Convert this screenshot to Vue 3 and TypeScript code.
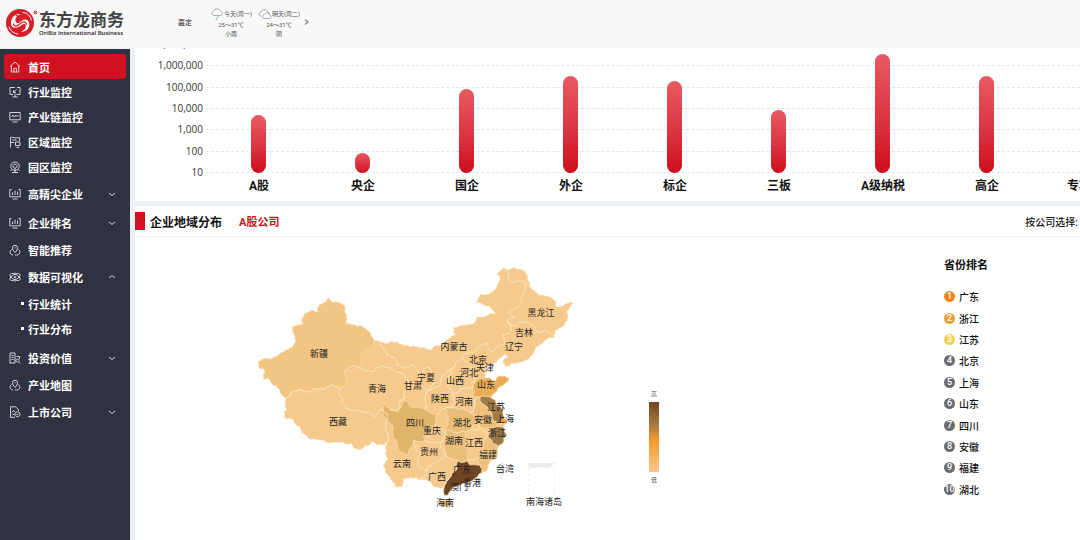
<script setup lang="ts">
type Point = [number, number]

interface NavItem {
  label: string
  icon: string
  active?: boolean
  open?: boolean
  children?: string[]
}

const icons: Record<string, string> = {
  home: 'M1 5.6 6 1l5 4.6M2.3 4.6V11h7.4V4.6M4.8 11V7.4h2.6V11',
  monitor: 'M6 1.5H1v7h3M8 1.500h3v7H7.500M3.500 11h5M7.500 3.500l-3 3M4.500 4.200v2.300h2.300M6 7.500V11',
  wave: 'M.8 1.5h10.4v7.3H.8zM3.5 11h5M2.5 6 4 4l1.5 2.2L7 4l1.2 1.6L9.500 4.500',
  region: 'M1.500 11.500V1.500C4 .5 5 2.800 10.500 1.500V5M1.500 6.500H5M6.500 6h4.500v3.500H6.500zM7.500 11.500h2.500M3.500 4h4',
  park: 'M6 1a4.200 4.200 0 1 0 .01 0M6 3.200a2 2 0 1 0 .01 0M6 7.500V11.500M3 11.500h6M2.500 8.500l-1 1.500M9.500 8.500l1 1.500',
  bars: 'M2.500 1.500H.8v7.300h10.400V1.500H9.500M3.500 11h5M3.500 7V4.500M6 7V2.500M8.500 7V3.500',
  pin: 'M6 8.500C4.200 6.500 3.500 5.400 3.500 3.800a2.500 2.500 0 0 1 5 0C8.500 5.400 7.800 6.500 6 8.500ZM6 3.300v1M2.500 5.500C0 7.500 1 11 4 11M9.500 5.500C12 7.500 11 11 7.500 11H6',
  atom: 'M1 3.500C3 0 12.500 6 11 8.500 9 12-.5 6 1 3.500ZM11 3.500C9 0-.5 6 1 8.500 3 12 12.500 6 11 3.500ZM6 5.400a.8.8 0 1 0 .01 0M6 1.500v1M6 9.700v1',
  building: 'M1 11V1h5v10M.5 11h5.500M2.500 3.500h2M2.500 5.500h2M2.500 7.500h2M7.500 4.500h3V7M8.500 7a1.500 1.500 0 1 0 .01 0M9.800 10l1.500 1.500',
  listed: 'M6 11.300H1.500V.8h5L9.500 3.500V5M3 6.500l1.500-2L6 6M3.500 8.500h2M8.500 5.800a2.500 2.500 0 1 0 .01 0M7.500 8.300l.8.8L9.700 7.700'
}

const navItems: NavItem[] = [
  { label: '首页', icon: 'home', active: true },
  { label: '行业监控', icon: 'monitor' },
  { label: '产业链监控', icon: 'wave' },
  { label: '区域监控', icon: 'region' },
  { label: '园区监控', icon: 'park' },
  { label: '高精尖企业', icon: 'bars', children: [] },
  { label: '企业排名', icon: 'bars', children: [] },
  { label: '智能推荐', icon: 'pin' },
  { label: '数据可视化', icon: 'atom', open: true, children: ['行业统计', '行业分布'] },
  { label: '投资价值', icon: 'building', children: [] },
  { label: '产业地图', icon: 'pin' },
  { label: '上市公司', icon: 'listed', children: [] }
]

const axisTicks = ['10,000,000', '1,000,000', '100,000', '10,000', '1,000', '100', '10']

const bars = [
  { label: 'A股', height: 45 },
  { label: '央企', height: 16 },
  { label: '国企', height: 66 },
  { label: '外企', height: 76 },
  { label: '标企', height: 72 },
  { label: '三板', height: 49 },
  { label: 'A级纳税', height: 93 },
  { label: '高企', height: 76 },
  { label: '专项企业', height: 47 }
]

const ranking = ['广东', '浙江', '江苏', '北京', '上海', '山东', '四川', '安徽', '福建', '湖北']

const mainland =
  '258,362 265,358 269,359 280,354 293,346 295,338 292,327 303,324 305,313 318,312 319,305 326,302 328,298 332,302 345,308 347,315 346,324 362,326 370,332 374,341 380,342 397,342 408,345 420,348 443,343 456,335 453,327 460,326 477,317 496,314 490,307 475,303 480,294 492,292 500,280 497,273 503,268 515,268 525,272 530,283 537,293 552,298 557,307 573,303 565,323 555,330 554,338 543,343 535,350 520,362 505,367 503,362 508,357 505,354 498,360 492,364 485,371 485,378 495,381 500,376 509,378 507,382 498,388 490,397 495,400 503,413 505,420 503,427 507,435 503,443 498,447 497,455 488,468 482,473 473,480 463,483 453,487 448,495 444,495 444,488 435,487 428,480 420,480 403,480 402,487 395,487 390,477 383,465 388,458 387,442 378,445 372,442 360,450 354,449 351,443 340,442 328,443 318,440 300,427 285,418 284,412 287,410 285,402 286,398 280,390 273,385 270,380 263,379 265,371 259,368'

const provinces: { points: string; fill: string }[] = [
  { fill: '#f3c583', points: '258,362 265,358 269,359 280,354 293,346 295,338 292,327 303,324 305,313 318,312 319,305 326,302 328,298 332,302 345,308 347,315 346,324 362,326 370,332 374,341 362,352 357,367 344,371 347,386 340,388 332,385 320,389 305,392 292,392 286,398 280,390 273,385 270,380 263,379 265,371 259,368' },
  { fill: '#e1b46c', points: '383,402 390,410 398,412 405,400 413,408 425,410 437,415 435,425 425,430 425,440 415,440 407,455 398,447 393,438 390,423' },
  { fill: '#e9ae58', points: '473,397 473,387 477,380 485,378 495,381 500,376 509,378 507,382 498,388 490,397 480,397' },
  { fill: '#a37c48', points: '480,397 490,397 495,400 503,413 505,420 498,423 492,418 488,408' },
  { fill: '#9b7846', points: '490,428 503,427 507,435 503,443 498,447 492,443 488,437' },
  { fill: '#6d4522', points: '457,462 467,461 470,465 480,465 482,473 473,480 463,483 453,487 448,495 444,495 444,488 448,480 457,468' },
  { fill: '#ebbf7a', points: '445,430 465,432 467,447 467,460 453,460 447,457 444,443' },
  { fill: '#e9bd78', points: '445,408 453,408 470,413 477,423 470,430 465,432 445,430 448,423' },
  { fill: '#edc17c', points: '488,437 492,443 498,447 497,455 488,468 482,473 480,465 478,458 483,447' },
  { fill: '#edc17c', points: '480,397 488,408 492,418 498,423 490,428 480,428 477,423 473,410 475,400' },
  { fill: '#f0a040', points: '478,357 483,356 485,361 480,364' },
  { fill: '#f59a2c', points: '502,420 506,419 507,423 503,424' },
  { fill: '#edbd72', points: '440,500 448,498 453,501 448,508 442,506' }
]

const borders = [
  '344,371 355,366 357,367 374,372 379,367 393,370 407,379 407,388 405,398 398,402 400,407 395,411 390,410',
  '286,398 292,392 305,392 320,389 332,385 340,388 339,395 342,397 341,403 347,409 363,412 375,417 382,409 387,414 388,435 387,442',
  '379,342 387,355 395,358 397,365 405,368 413,365 420,375 418,382 424,388 430,390 425,400 425,410',
  '420,375 423,370 428,366 431,373 434,383 430,390',
  '430,390 440,385 442,375 452,368 462,358 475,352 481,345 488,343 493,352 505,343 503,335 512,330 507,322 515,318 510,310 525,293 527,283 510,282 503,268',
  '507,322 517,326 527,322 537,332 553,335',
  '452,368 448,378 452,393 453,408 445,408 437,415',
  '462,358 472,367 473,387 467,388 452,393',
  '473,397 475,405 470,413',
  '477,423 480,428 488,437',
  '470,430 480,428',
  '435,425 442,430 446,437 440,443 425,440',
  '440,443 445,455 440,460 427,470 418,463 420,452 413,443 415,440',
  '427,470 425,477 420,480',
  '457,468 448,480 444,488',
  '453,460 447,457 445,455',
  '467,460 478,458'
]

const labels: [string, number, number][] = [
  ['新疆', 319, 354], ['西藏', 338, 422], ['青海', 377, 389], ['甘肃', 413, 386], ['四川', 415, 423],
  ['云南', 402, 464], ['贵州', 429, 452], ['重庆', 432, 431], ['广西', 437, 477], ['海南', 445, 503],
  ['澳门', 459, 487], ['香港', 472, 483], ['广东', 462, 470], ['福建', 488, 455], ['台湾', 505, 469],
  ['南海诸岛', 544, 502], ['浙江', 497, 433], ['上海', 505, 419], ['江苏', 496, 407], ['安徽', 483, 420],
  ['湖北', 462, 423], ['湖南', 454, 441], ['江西', 474, 443], ['河南', 464, 402], ['陕西', 440, 399],
  ['山西', 455, 381], ['山东', 486, 385], ['宁夏', 426, 378], ['河北', 469, 373], ['天津', 485, 368],
  ['北京', 478, 360], ['内蒙古', 454, 347], ['辽宁', 514, 347], ['吉林', 524, 333], ['黑龙江', 541, 313]
]

// Midpoint displacement seeded by the edge's end points, so shared edges stay aligned.
function roughen(a: Point, b: Point): Point[] {
  const length = Math.hypot(b[0] - a[0], b[1] - a[1])
  if (length < 3) return [b]
  const forward = a[0] < b[0] || (a[0] === b[0] && a[1] < b[1])
  const [p, q] = forward ? [a, b] : [b, a]
  const seed = Math.sin(p[0] * 12.9898 + p[1] * 78.233 + q[0] * 37.719 + q[1] * 4.581) * 43758.5453
  const shift = (seed - Math.floor(seed) - 0.5) * 0.4
  const middle: Point = [
    (p[0] + q[0]) / 2 - (q[1] - p[1]) * shift,
    (p[1] + q[1]) / 2 + (q[0] - p[0]) * shift
  ]
  return [...roughen(a, middle), ...roughen(middle, b)]
}

function trace(points: string, closed: boolean): string {
  const list = points.split(' ').map((pair) => pair.split(',').map(Number) as Point)
  const ring = closed ? [...list, list[0]] : list
  const out: Point[] = [ring[0]]
  for (let i = 1; i < ring.length; i++) out.push(...roughen(ring[i - 1], ring[i]))
  return 'M' + out.map(([x, y]) => `${x.toFixed(1)},${y.toFixed(1)}`).join('L') + (closed ? 'Z' : '')
}
</script>

<template>
  <div class="app">
    <header class="topbar">
      <a class="brand" href="#">
        <svg class="brand-mark" viewBox="0 0 32 30" aria-hidden="true">
          <circle cx="14" cy="15" r="14" fill="#d5202a" />
          <path d="M5 15.500C5 9 9.500 5.500 14.500 6.200c-3 1-5.500 3.300-5 6.800.5 2.200 2.500 2.500 4 1.500l3-2.200c3.500-2 6.800 0 6.800 4.200 0 5-4.300 7.800-9.300 7.300 3.500-.8 6-3 5.800-6-.2-2-2-2.400-3.600-1.300l-3 2.200C9.500 20.900 5 20 5 15.500Z" fill="#f8f8f8" />
          <path d="M7.500 15.500c0 2.500 2.500 3.300 4.500 1.800l3.500-2.500c2-1.500 5-1 5 2M10 7l3.500 2.500-2 1.500 3.500 1" fill="none" stroke="#d5202a" stroke-width="1.300" />
          <path d="M17 4.500c4 .3 7.500 3.200 8.300 7.500M3 19c1.500 4 4.500 6.500 8.500 7" fill="none" stroke="#f8f8f8" stroke-width="1" stroke-linecap="round" />
          <circle cx="29.500" cy="4.500" r="1.400" fill="#e8a0a4" stroke="#d5202a" />
        </svg>
        <span class="brand-text">
          <span class="brand-name">东方龙商务</span>
          <span class="brand-sub">OriBiz International Business</span>
        </span>
      </a>
      <div class="weather">
        <span class="city">嘉定</span>
        <div class="day">
          <span class="day-head">
            <svg viewBox="0 0 14 14" aria-hidden="true">
              <path d="M3.500 8.500a2.500 2.500 0 0 1 0-4.500A4 4 0 0 1 10.500 4a2.300 2.300 0 0 1 0 4.500Z" fill="#fff" stroke="#a5a8ad" />
              <path d="M8 9.500 7.500 11M6.500 11.500 6 13" stroke="#35b3e6" />
            </svg>
            今天(周一)
          </span>
          <span>25～31℃</span>
          <span>小雨</span>
        </div>
        <div class="day">
          <span class="day-head">
            <svg viewBox="0 0 14 14" aria-hidden="true">
              <path d="M3 9.500a2.300 2.300 0 0 1 0-4.500A3.500 3.500 0 0 1 9 4l3 3" fill="#fff" stroke="#a5a8ad" />
              <path d="M6 11.500a2 2 0 0 1 0-3.800 3 3 0 0 1 5.500 0 2 2 0 0 1 0 3.800Z" fill="#fff" stroke="#a5a8ad" />
            </svg>
            明天(周二)
          </span>
          <span>24～31℃</span>
          <span>阴</span>
        </div>
        <button class="next" type="button" aria-label="更多天气">
          <svg viewBox="0 0 6 6" aria-hidden="true"><path d="M1 .5 4 3 1 5.500" fill="none" stroke="#888" stroke-width="1.300" /></svg>
        </button>
      </div>
    </header>

    <div class="body">
      <nav class="sidebar">
        <template v-for="item in navItems" :key="item.label">
          <a class="nav-item" :class="{ active: item.active, group: item.children }" href="#">
            <svg class="nav-icon" viewBox="0 0 12 12" aria-hidden="true"><path :d="icons[item.icon]" /></svg>
            <span class="nav-label">{{ item.label }}</span>
            <svg v-if="item.children" class="chevron" :class="{ up: item.open }" viewBox="0 0 8 8" aria-hidden="true">
              <path d="M1 3l3 2.500L7 3" />
            </svg>
          </a>
          <div v-if="item.open" class="subnav">
            <a v-for="child in item.children" :key="child" class="sub-item" href="#">{{ child }}</a>
          </div>
        </template>
      </nav>

      <main class="content">
        <section class="panel chart">
          <div class="plot-row">
            <div class="axis">
              <span v-for="tick in axisTicks" :key="tick" class="tick">{{ tick }}</span>
            </div>
            <div class="plot">
              <div class="grid-lines"><i v-for="n in 6" :key="n"></i></div>
              <div class="bars">
                <div v-for="bar in bars" :key="bar.label" class="bar-cell">
                  <div class="bar" :style="{ height: bar.height + '%' }"></div>
                </div>
              </div>
            </div>
          </div>
          <div class="bar-labels">
            <span v-for="bar in bars" :key="bar.label">{{ bar.label }}</span>
          </div>
        </section>

        <section class="panel region">
          <div class="region-head">
            <h2>企业地域分布</h2>
            <span class="scope">A股公司</span>
            <span class="choose">按公司选择:</span>
          </div>
          <div class="region-body">
            <svg class="map" viewBox="250 258 350 257" role="img" aria-label="企业地域分布">
              <path :d="trace(mainland, true)" fill="#f6ca8c" stroke="#fbe3bd" stroke-width=".6" />
              <path v-for="(area, i) in provinces" :key="i" :d="trace(area.points, true)" :fill="area.fill" stroke="#fae0b6" stroke-width=".6" />
              <path v-for="(line, i) in borders" :key="'b' + i" :d="trace(line, false)" fill="none" stroke="#fdebcf" stroke-width=".8" />
              <path d="M500 463l4-1 1 4-2 10-2 5-2-8Z" fill="#eee" />
              <path d="M528 463h27l-6 5-10-1-10 2Z" fill="#ececec" />
              <path d="M528.500 469v28h26v-28" fill="none" stroke="#eee" stroke-dasharray="2 3" />
              <text v-for="[name, x, y] in labels" :key="name" :x="x" :y="y + 3">{{ name }}</text>
            </svg>
            <div class="legend">
              <span>高</span>
              <div class="ramp"></div>
              <span>低</span>
            </div>
            <aside class="ranking">
              <h3>省份排名</h3>
              <ol>
                <li v-for="(name, i) in ranking" :key="name">
                  <span class="badge" :class="'rank-' + (i + 1)">{{ i + 1 }}</span>{{ name }}
                </li>
              </ol>
            </aside>
          </div>
        </section>
      </main>
    </div>
  </div>
</template>

<style>
body {
  margin: 0;
  overflow: hidden;
}
</style>

<style scoped>
.app {
  display: flex;
  flex-direction: column;
  height: 100vh;
  overflow: hidden;
  background: #edf1f6;
  color: #111;
  font-family: Roboto, "Noto Sans CJK SC", sans-serif;
  font-size: 11px;
}
a {
  color: inherit;
  text-decoration: none;
}
.topbar {
  display: flex;
  flex: none;
  height: 48px;
  background: #f8f8f8;
}
.brand {
  display: flex;
  align-items: center;
  width: 172px;
  padding: 0 0 2px 6px;
  box-sizing: border-box;
}
.brand-mark {
  width: 32px;
  height: 30px;
}
.brand-text {
  display: flex;
  flex-direction: column;
  margin-left: 1px;
  white-space: nowrap;
}
.brand-name {
  color: #444;
  font-size: 17px;
  font-weight: 700;
  line-height: 20px;
}
.brand-sub {
  color: #222;
  font-family: "Open Sans", sans-serif;
  font-size: 6px;
  font-weight: 600;
  line-height: 7px;
}
.weather {
  display: flex;
  gap: 2px;
  padding: 7px 0 0 6px;
  color: #555;
  font-size: 6px;
}
.city {
  width: 28px;
  padding-top: 10px;
  color: #222;
  font-size: 7px;
}
.day {
  display: flex;
  flex-direction: column;
  align-items: center;
  width: 46px;
  line-height: 9px;
  white-space: nowrap;
}
.day-head {
  display: flex;
  align-items: center;
  height: 13px;
}
.day-head svg {
  width: 14px;
  height: 14px;
}
.next {
  width: 6px;
  height: 6px;
  margin: 12px 0 0;
  padding: 0;
  border: 0;
  background: none;
}
.next svg {
  display: block;
}
.body {
  display: flex;
  flex: 1;
  min-height: 0;
}
.sidebar {
  flex: none;
  width: 130px;
  padding: 5px 4px 0;
  margin-top: 1px;
  box-sizing: border-box;
  background: #303141;
  color: #fff;
  font-weight: 700;
}
.nav-item {
  display: flex;
  align-items: center;
  height: 25px;
  padding: 0 10px 0 5px;
  border-radius: 3px;
}
.nav-item.group {
  height: 29px;
}
.nav-item.active {
  background: #d01120;
}
.nav-icon {
  width: 12px;
  height: 12px;
  margin-right: 7px;
  fill: none;
  stroke: #e6e6ea;
  stroke-width: 0.9;
}
.nav-label {
  flex: 1;
}
.chevron {
  width: 8px;
  height: 8px;
  fill: none;
  stroke: #d6d6dc;
}
.chevron.up {
  transform: rotate(180deg);
}
.subnav {
  padding-bottom: 2px;
}
.sub-item {
  display: flex;
  align-items: center;
  height: 25px;
  padding-left: 17px;
}
.sub-item::before {
  content: "";
  width: 3px;
  height: 3px;
  margin-right: 4px;
  background: #fff;
}
.content {
  display: flex;
  flex: 1;
  flex-direction: column;
  gap: 5px;
  min-width: 0;
  padding-left: 5px;
}
.panel {
  background: #fff;
}
.chart {
  display: flex;
  flex: none;
  flex-direction: column;
  justify-content: flex-end;
  height: 153px;
  overflow: hidden;
}
.plot-row {
  display: flex;
  flex: none;
  height: 128px;
}
.axis {
  display: flex;
  flex-direction: column;
  justify-content: space-between;
  width: 68px;
  margin: -8px 3px -6px 0;
  text-align: right;
}
.tick {
  height: 14px;
  color: #333;
  font-family: "Open Sans", sans-serif;
  font-size: 10px;
  line-height: 14px;
}
.plot {
  display: grid;
  flex: 1;
  min-width: 0;
}
.grid-lines,
.bars {
  grid-area: 1 / 1;
  min-width: 0;
}
.grid-lines {
  display: grid;
  grid-auto-rows: 1fr;
}
.grid-lines i {
  border-bottom: 1px dashed #e3e5ea;
}
.bars,
.bar-labels {
  display: grid;
  grid-auto-columns: 104px;
  grid-auto-flow: column;
}
.bar-cell {
  display: flex;
  align-items: flex-end;
  justify-content: center;
}
.bar {
  width: 15px;
  border-radius: 8px;
  background: linear-gradient(#e95a64, #dc3440 55%, #cf0d1c);
}
.bar-labels {
  flex: none;
  height: 28px;
  padding-left: 72px;
  font-size: 12px;
  font-weight: 700;
  line-height: 26px;
  text-align: center;
}
.region {
  flex: 1;
}
.region-head {
  display: flex;
  align-items: center;
  height: 30px;
  padding-right: 2px;
  border-bottom: 1px solid #eef1f6;
}
.region-head::before {
  content: "";
  width: 10px;
  height: 18px;
  margin-right: 5px;
  background: #d01120;
}
h2 {
  margin: 0;
  font-size: 12px;
  font-weight: 700;
}
.scope {
  margin-left: 17px;
  color: #d01120;
  font-weight: 700;
}
.choose {
  margin-left: auto;
  font-size: 10px;
  font-weight: 500;
}
.region-body {
  display: flex;
  align-items: flex-start;
  padding: 21px 91px 0 115px;
}
.map {
  flex: none;
  width: 350px;
  height: 257px;
}
.map text {
  fill: #222;
  font-size: 9px;
  text-anchor: middle;
}
.legend {
  display: flex;
  flex-direction: column;
  align-items: center;
  gap: 4px;
  margin: 132px 0 0 49px;
  color: #555;
  font-size: 6px;
  line-height: 8px;
}
.ramp {
  width: 10px;
  height: 70px;
  background: linear-gradient(#704420, #a07640 30%, #f79a2e 55%, #f8c988);
}
.ranking {
  width: 45px;
  margin-left: auto;
}
h3 {
  margin: 0;
  font-size: 11px;
  font-weight: 700;
  line-height: 16px;
}
ol {
  display: grid;
  grid-auto-rows: 1fr;
  height: 214px;
  margin: 12px 0 0;
  padding: 0;
  list-style: none;
}
li {
  display: flex;
  align-items: center;
  gap: 4px;
  font-size: 10px;
  font-weight: 500;
}
.badge {
  width: 11px;
  height: 11px;
  border-radius: 50%;
  background: #6a6c70;
  color: #fff;
  font-size: 9px;
  line-height: 11px;
  text-align: center;
}
.rank-1 {
  background: #f08519;
}
.rank-2 {
  background: #eda032;
}
.rank-3 {
  background: #f3cf55;
}
</style>
